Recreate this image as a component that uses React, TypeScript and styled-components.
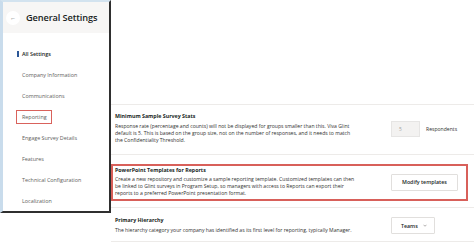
import styled, { createGlobalStyle } from 'styled-components';

const GlobalStyle = createGlobalStyle`
  html, body {
    margin: 0;
    padding: 0;
    background: #ffffff;
  }
  body {
    font-family: "Open Sans", "Noto Sans", sans-serif;
    color: #323130;
  }
`;

const Page = styled.div`
  display: flex;
  align-items: flex-start;
  width: 474px;
  height: 243px;
  overflow: hidden;
  background: #ffffff;
`;

const Panel = styled.aside`
  flex-shrink: 0;
  width: 111px;
  height: 213px;
  box-sizing: border-box;
  border-left: 3px solid #c9dcec;
  border-top: 2px solid #d3e3ef;
  border-right: 2px solid #2f2f2f;
  border-bottom: 2px solid #2f2f2f;
  background: #ffffff;
  display: flex;
  flex-direction: column;
`;

const PanelHeader = styled.div`
  display: flex;
  align-items: center;
  gap: 6px;
  height: 31px;
  padding-left: 3px;
  background: #f7f6f5;
`;

const BackButton = styled.div`
  width: 14px;
  height: 14px;
  border-radius: 50%;
  background: #ffffff;
  display: flex;
  align-items: center;
  justify-content: center;
  font-size: 6px;
  color: #605e5c;
`;

const PanelTitle = styled.h1`
  margin: 0;
  font-size: 9.2px;
  font-weight: 600;
  color: #201f1e;
  letter-spacing: -0.1px;
`;

const Nav = styled.nav`
  display: flex;
  flex-direction: column;
  padding: 10px 0 0 13px;
`;

const NavItem = styled.div<{ $active?: boolean }>`
  display: flex;
  align-items: center;
  height: 21px;
  font-size: 5.4px;
  color: ${p => (p.$active ? '#201f1e' : '#605e5c')};
  font-weight: ${p => (p.$active ? 600 : 400)};
`;

const NavLabel = styled.span<{ $active?: boolean; $marked?: boolean }>`
  position: relative;
  display: flex;
  align-items: center;
  height: 12px;
  padding: 0 4px 0 5px;
  border: 1px solid ${p => (p.$marked ? '#d9625c' : 'transparent')};

  &::before {
    content: '';
    display: ${p => (p.$active ? 'block' : 'none')};
    position: absolute;
    left: 0;
    top: 3px;
    width: 1.5px;
    height: 6px;
    background: #2b5797;
  }
`;

const Main = styled.main`
  flex: 1;
  display: flex;
  flex-direction: column;
  padding-top: 104px;
  min-width: 0;
`;

const Row = styled.section<{ $pad: string }>`
  border-top: 1px solid #edebe9;
  padding: ${p => p.$pad};
`;

const Highlight = styled.div<{ $marked?: boolean }>`
  display: grid;
  grid-template-columns: 1fr 72px;
  align-items: center;
  padding: 1px 3px 2px 2px;
  margin-right: 6px;
  border: 2px solid ${p => (p.$marked ? '#d8605a' : 'transparent')};
`;

const TextBlock = styled.div<{ $gap: number }>`
  display: flex;
  flex-direction: column;
  gap: ${p => p.$gap}px;
`;

const Title = styled.h2`
  margin: 0;
  font-size: 5.3px;
  line-height: 7px;
  font-weight: 700;
  color: #201f1e;
`;

const Description = styled.p`
  margin: 0;
  font-size: 5.1px;
  line-height: 7px;
  color: #323130;
  white-space: nowrap;
`;

const Control = styled.div`
  display: flex;
  align-items: center;
  gap: 6px;
`;

const NumberBox = styled.div`
  width: 29px;
  height: 16px;
  box-sizing: border-box;
  background: #f3f2f1;
  border: 1px solid #e6e5e4;
  font-size: 4.8px;
  color: #a19f9d;
  display: flex;
  align-items: center;
  padding-left: 7px;
`;

const ControlLabel = styled.span`
  font-size: 5.1px;
  color: #323130;
`;

const Button = styled.button`
  height: 17px;
  padding: 0 10px;
  background: #ffffff;
  border: 1px solid #e1dfdd;
  border-radius: 1px;
  font-family: inherit;
  font-size: 5.3px;
  font-weight: 600;
  color: #201f1e;
  cursor: pointer;
`;

const Dropdown = styled(Button)`
  display: flex;
  align-items: center;
  gap: 5px;
  padding: 0 7px 0 9px;
`;

const Chevron = styled.svg`
  width: 4px;
  height: 3px;
`;

export default function App() {
  const navItems = [
    'All Settings',
    'Company Information',
    'Communications',
    'Reporting',
    'Engage Survey Details',
    'Features',
    'Technical Configuration',
    'Localization',
  ];

  return (
    <>
      <GlobalStyle />
      <Page>
        <Panel>
          <PanelHeader>
            <BackButton>←</BackButton>
            <PanelTitle>General Settings</PanelTitle>
          </PanelHeader>
          <Nav>
            {navItems.map(item => (
              <NavItem key={item} $active={item === 'All Settings'}>
                <NavLabel $active={item === 'All Settings'} $marked={item === 'Reporting'}>
                  {item}
                </NavLabel>
              </NavItem>
            ))}
          </Nav>
        </Panel>
        <Main>
          <Row $pad="5px 0 6px 0">
            <Highlight>
              <TextBlock $gap={3}>
                <Title>Minimum Sample Survey Stats</Title>
                <Description>
                  Response rate (percentage and counts) will not be displayed for groups smaller than this. Viva Glint
                  <br />
                  default is 5. This is based on the group size, not on the number of responses, and it needs to match
                  <br />
                  the Confidentiality Threshold.
                </Description>
              </TextBlock>
              <Control>
                <NumberBox>5</NumberBox>
                <ControlLabel>Respondents</ControlLabel>
              </Control>
            </Highlight>
          </Row>
          <Row $pad="9px 0 6px 0">
            <Highlight $marked>
              <TextBlock $gap={2}>
                <Title>PowerPoint Templates for Reports</Title>
                <Description>
                  Create a new repository and customize a sample reporting template. Customized templates can then
                  <br />
                  be linked to Glint surveys in Program Setup, so managers with access to Reports can export their
                  <br />
                  reports to a preferred PowerPoint presentation format.
                </Description>
              </TextBlock>
              <Control>
                <Button>Modify templates</Button>
              </Control>
            </Highlight>
          </Row>
          <Row $pad="6px 0 3px 0">
            <Highlight>
              <TextBlock $gap={3}>
                <Title>Primary Hierarchy</Title>
                <Description>
                  The hierarchy category your company has identified as its first level for reporting, typically Manager.
                </Description>
              </TextBlock>
              <Control>
                <Dropdown>
                  Teams
                  <Chevron viewBox="0 0 8 5">
                    <path d="M1 1l3 3 3-3" fill="none" stroke="#605e5c" strokeWidth="1" />
                  </Chevron>
                </Dropdown>
              </Control>
            </Highlight>
          </Row>
          <Row $pad="0" />
        </Main>
      </Page>
    </>
  );
}
